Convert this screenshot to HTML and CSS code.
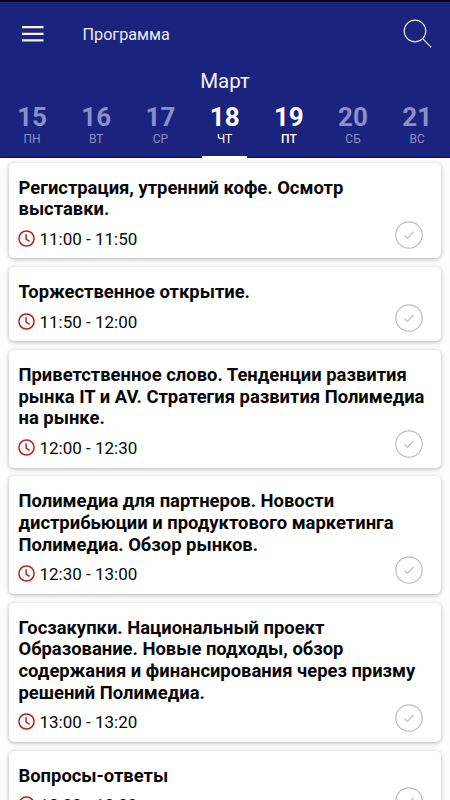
FILE: index.html
```html
<!DOCTYPE html>
<html lang="ru">
<head>
<meta charset="utf-8">
<title>Программа</title>
<link rel="stylesheet" href="styles.css">
</head>
<body>
<svg class="defs" width="0" height="0" aria-hidden="true">
  <symbol id="clock" viewBox="0 0 17 17"><circle cx="8.5" cy="8.5" r="7.6"/><path d="M8.1 4.2v4.9l3.5 2.2"/></symbol>
  <symbol id="check" viewBox="0 0 28 28"><circle cx="14" cy="14" r="13.2"/><path d="M9.5 14.4l2.9 2.9 6.1-6.4"/></symbol>
</svg>
<header class="header">
  <div class="toolbar">
    <svg class="menu" viewBox="0 0 22 16"><path d="M0 1.2h21.5M0 7.8h21.5M0 14.4h21.5"/></svg>
    <h1 class="title">Программа</h1>
    <svg class="search" viewBox="0 0 30 30"><circle cx="12" cy="12" r="10.8"/><path d="M19.7 19.7l8.5 8.7"/></svg>
  </div>
  <div class="month">Март</div>
  <nav class="days">
    <div class="day"><b>15</b><span>ПН</span></div>
    <div class="day"><b>16</b><span>ВТ</span></div>
    <div class="day"><b>17</b><span>СР</span></div>
    <div class="day on selected"><b>18</b><span>ЧТ</span></div>
    <div class="day on event"><b>19</b><span>ПТ</span></div>
    <div class="day"><b>20</b><span>СБ</span></div>
    <div class="day"><b>21</b><span>ВС</span></div>
  </nav>
</header>
<main class="list">
  <article class="card">
    <h2>Регистрация, утренний кофе. Осмотр<br>выставки.</h2>
    <div class="meta"><svg class="clock"><use href="#clock"/></svg><time>11:00 - 11:50</time><svg class="check"><use href="#check"/></svg></div>
  </article>
  <article class="card">
    <h2>Торжественное открытие.</h2>
    <div class="meta"><svg class="clock"><use href="#clock"/></svg><time>11:50 - 12:00</time><svg class="check"><use href="#check"/></svg></div>
  </article>
  <article class="card">
    <h2>Приветственное слово. Тенденции развития<br>рынка IT и AV. Стратегия развития Полимедиа<br>на рынке.</h2>
    <div class="meta"><svg class="clock"><use href="#clock"/></svg><time>12:00 - 12:30</time><svg class="check"><use href="#check"/></svg></div>
  </article>
  <article class="card">
    <h2>Полимедиа для партнеров. Новости<br>дистрибьюции и продуктового маркетинга<br>Полимедиа. Обзор рынков.</h2>
    <div class="meta"><svg class="clock"><use href="#clock"/></svg><time>12:30 - 13:00</time><svg class="check"><use href="#check"/></svg></div>
  </article>
  <article class="card">
    <h2>Госзакупки. Национальный проект<br>Образование. Новые подходы, обзор<br>содержания и финансирования через призму<br>решений Полимедиа.</h2>
    <div class="meta"><svg class="clock"><use href="#clock"/></svg><time>13:00 - 13:20</time><svg class="check"><use href="#check"/></svg></div>
  </article>
  <article class="card">
    <h2>Вопросы-ответы</h2>
    <div class="meta"><svg class="clock"><use href="#clock"/></svg><time>13:20 - 13:30</time><svg class="check"><use href="#check"/></svg></div>
  </article>
</main>
</body>
</html>
```
FILE: styles.css
```css
* { box-sizing: border-box; }
body {
  margin: 0;
  height: 800px;
  overflow: hidden;
  background: #fdfdfd;
  color: #060606;
  font-family: Roboto, "Liberation Sans", sans-serif;
}
svg { fill: none; flex: none; display: block; }
.defs { position: absolute; }
.header {
  height: 158px;
  background: #1a237e;
  border-top: 2px solid #02020c;
  border-bottom: 1px solid #060a55;
  color: #fff;
}
.toolbar {
  height: 64px;
  display: flex;
  align-items: center;
  padding: 0 17px 0 21.5px;
}
.menu { width: 22px; height: 16px; stroke: #f4f5ff; stroke-width: 2.3; }
.title {
  margin: 1px 0 0 39px;
  font-size: 16.2px;
  font-weight: 400;
  color: #e9ebfb;
}
.search { width: 30px; height: 30px; margin-left: auto; stroke: #e4e6f8; stroke-width: 1.2; }
.month {
  height: 37px;
  line-height: 30px;
  text-align: center;
  font-size: 20.5px;
  color: #f2f3ff;
}
.days { height: 54px; display: grid; grid-template-columns: repeat(7, 64.2px); }
.day {
  display: flex;
  flex-direction: column;
  align-items: center;
  color: #8a90c9;
}
.day b { font-size: 26px; line-height: 28px; font-weight: 700; }
.day span { font-size: 12px; line-height: 17px; }
.on { color: #fff; }
.selected::after {
  content: "";
  width: 45px;
  height: 3px;
  margin-top: 8px;
  flex: none;
  background: #fff;
}
.event span { font-weight: 500; }
.list { padding: 4.7px 9px 0; display: grid; gap: 8.8px; }
.card {
  padding: 13.9px 9.5px 0;
  background: #fff;
  border-radius: 5px;
  box-shadow: 0 1px 4px rgba(0, 0, 0, .3);
}
.card h2 { margin: 0; font-size: 18.4px; line-height: 21.65px; font-weight: 700; white-space: nowrap; }
.meta { height: 38.6px; display: flex; align-items: flex-start; }
.clock { width: 17px; height: 17px; margin: 10.1px 0 0 -0.5px; stroke: #b3261e; stroke-width: 1.5; }
.meta time { margin: 9px 0 0 4.5px; font-size: 17px; line-height: 20px; }
.check { width: 28px; height: 28px; margin: 0.9px 8.8px 0 auto; stroke: #bdbdbd; stroke-width: 1.2; }
```
